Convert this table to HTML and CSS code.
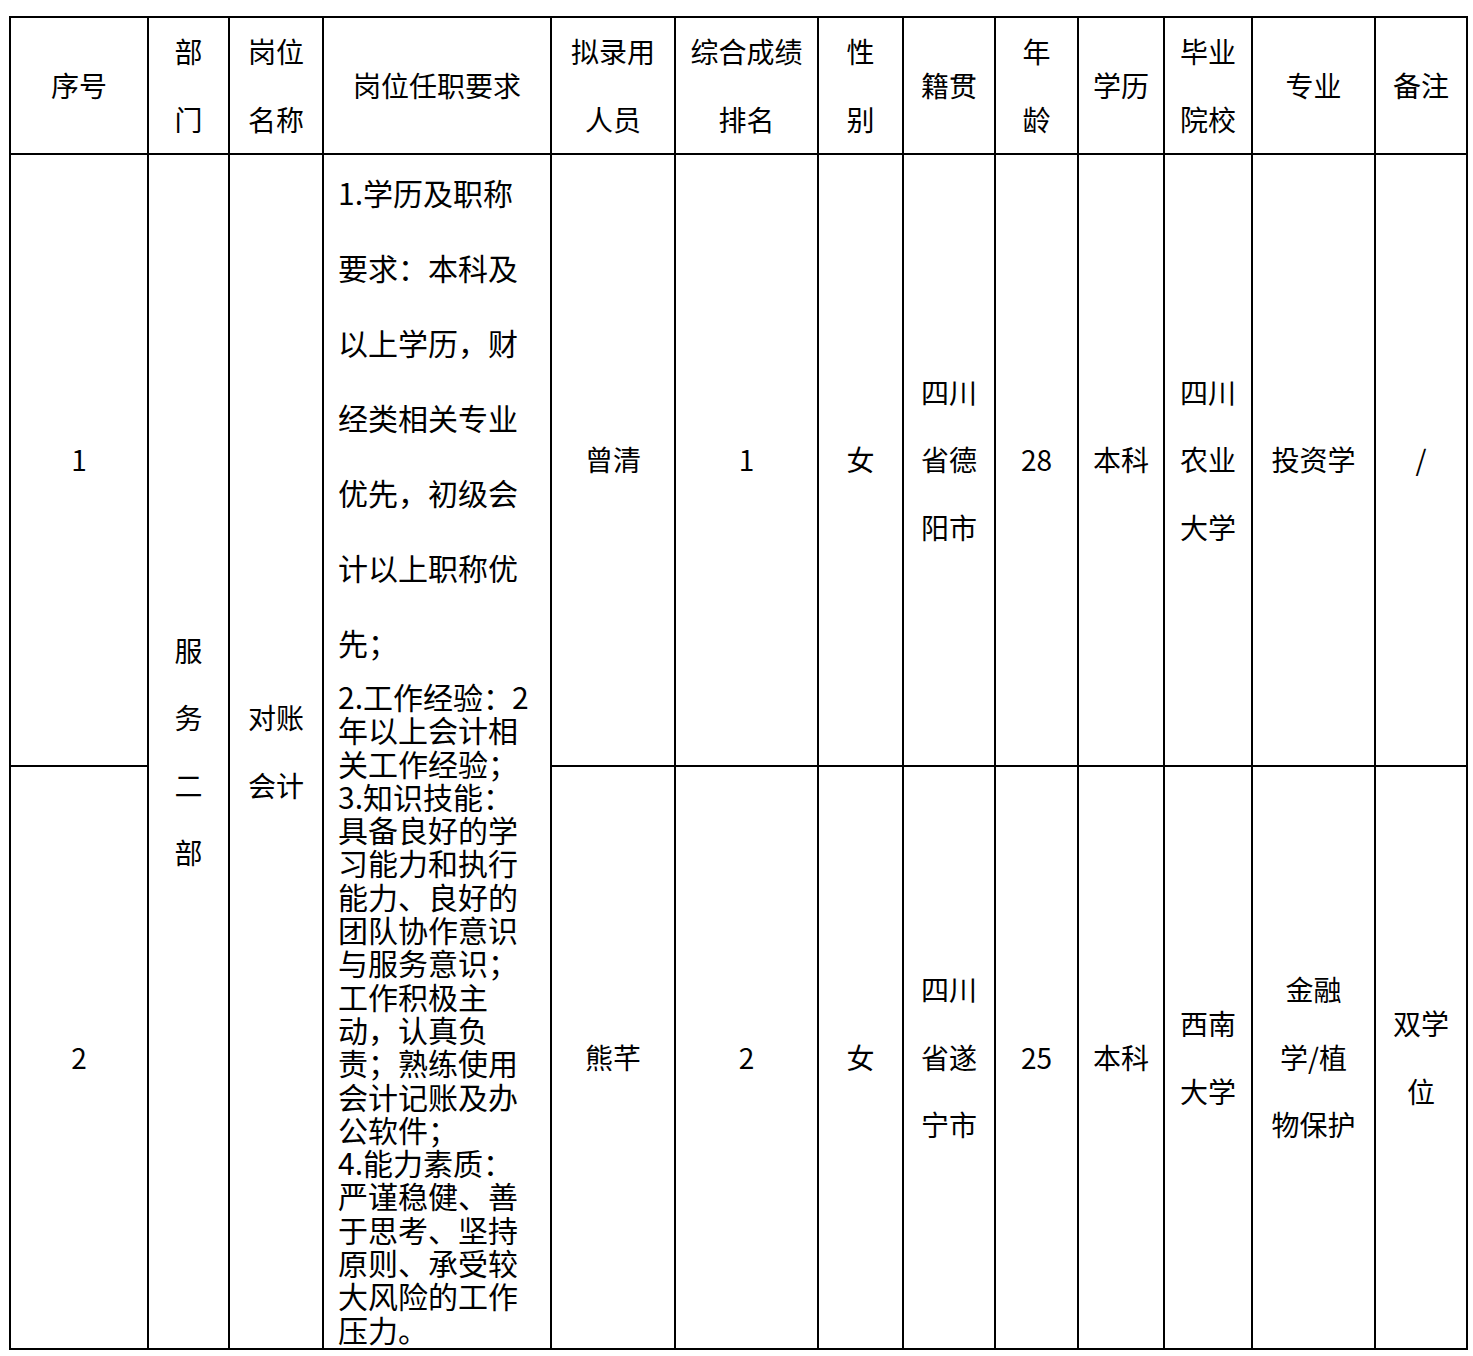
FILE: index.html
```html
<!DOCTYPE html>
<html lang="zh-CN">
<head>
<meta charset="utf-8">
<title>拟录用人员名单</title>
<link rel="stylesheet" href="styles.css">
</head>
<body>
<div class="page">
<table class="roster">
  <colgroup>
    <col class="c-no">
    <col class="c-dept">
    <col class="c-post">
    <col class="c-req">
    <col class="c-name">
    <col class="c-rank">
    <col class="c-sex">
    <col class="c-origin">
    <col class="c-age">
    <col class="c-edu">
    <col class="c-school">
    <col class="c-major">
    <col class="c-note">
  </colgroup>
  <thead>
    <tr class="head">
      <th>序号</th>
      <th>部<br>门</th>
      <th>岗位<br>名称</th>
      <th>岗位任职要求</th>
      <th>拟录用<br>人员</th>
      <th>综合成绩<br>排名</th>
      <th>性<br>别</th>
      <th>籍贯</th>
      <th>年<br>龄</th>
      <th>学历</th>
      <th>毕业<br>院校</th>
      <th>专业</th>
      <th>备注</th>
    </tr>
  </thead>
  <tbody>
    <tr class="r1">
      <td>1</td>
      <td rowspan="2">服<br>务<br>二<br>部</td>
      <td rowspan="2">对账<br>会计</td>
      <td rowspan="2" class="req">
        <p class="req-a">1.学历及职称<br>要求：本科及<br>以上学历，财<br>经类相关专业<br>优先，初级会<br>计以上职称优<br>先；</p>
        <p class="req-b">2.工作经验<span class="halt">：</span><span class="gap">2</span><br>年以上会计相<br>关工作经验；<br>3.知识技能：<br>具备良好的学<br>习能力和执行<br>能力、良好的<br>团队协作意识<br>与服务意识；<br>工作积极主<br>动，认真负<br>责；熟练使用<br>会计记账及办<br>公软件；<br>4.能力素质：<br>严谨稳健、善<br>于思考、坚持<br>原则、承受较<br>大风险的工作<br>压力。</p>
      </td>
      <td>曾清</td>
      <td>1</td>
      <td>女</td>
      <td>四川<br>省德<br>阳市</td>
      <td>28</td>
      <td>本科</td>
      <td>四川<br>农业<br>大学</td>
      <td>投资学</td>
      <td>/</td>
    </tr>
    <tr class="r2">
      <td>2</td>
      <td>熊芊</td>
      <td>2</td>
      <td>女</td>
      <td>四川<br>省遂<br>宁市</td>
      <td>25</td>
      <td>本科</td>
      <td>西南<br>大学</td>
      <td>金融<br>学/植<br>物保护</td>
      <td>双学<br>位</td>
    </tr>
  </tbody>
</table>
</div>
</body>
</html>
```
FILE: styles.css
```css
html, body {
  margin: 0;
  background: #fff;
}
body {
  font-family: "Noto Sans CJK SC", "Noto Sans", sans-serif;
  color: #000;
}
.page {
  padding: 16px 0 0 9px;
}
.roster {
  border-collapse: collapse;
  table-layout: fixed;
  width: 1459px;
  font-size: 28px;
}
.roster th,
.roster td {
  border: 2px solid #000;
  padding: 0 4px;
  text-align: center;
  vertical-align: middle;
  font-weight: normal;
  line-height: 67.5px;
  white-space: nowrap;
  overflow: hidden;
}
.c-no { width: 138px; }
.c-dept { width: 81px; }
.c-post { width: 94px; }
.c-req { width: 228px; }
.c-name { width: 124px; }
.c-rank { width: 143px; }
.c-sex { width: 85px; }
.c-origin { width: 92px; }
.c-age { width: 83px; }
.c-edu { width: 86px; }
.c-school { width: 88px; }
.c-major { width: 123px; }
.c-note { width: 92px; }

.head { height: 137px; }
.r1 { height: 612px; }
.r2 { height: 583px; }

.roster td.req {
  text-align: left;
  vertical-align: top;
  padding: 0 0 0 14px;
  font-size: 30px;
}
.req p {
  margin: 0;
}
.req-a {
  line-height: 75px;
}
.req-b {
  line-height: 33.3px;
}
.halt {
  font-feature-settings: "halt";
}
.gap {
  margin-left: 14px;
}
```
